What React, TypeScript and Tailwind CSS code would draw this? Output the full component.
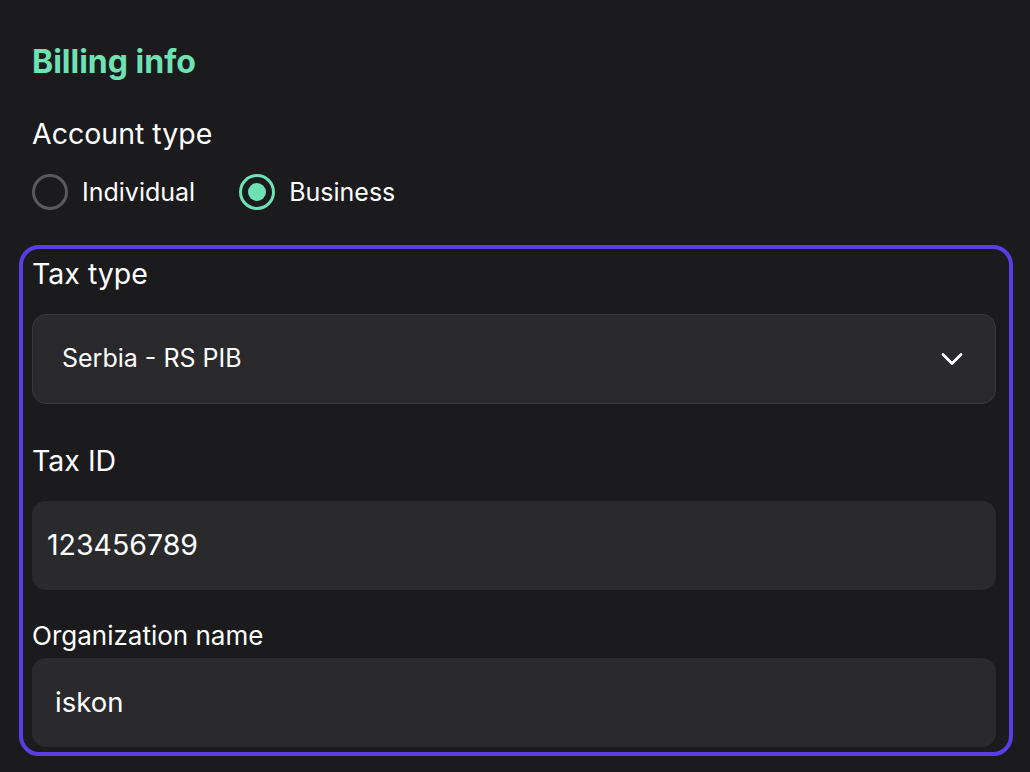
import { ChevronDown } from "lucide-react";

function Radio({ label, checked }: { label: string; checked?: boolean }) {
  return (
    <label className="flex items-center gap-[14px]">
      {checked ? (
        <span className="flex h-[36px] w-[36px] items-center justify-center rounded-full border-[3px] border-[#6ee2b3]">
          <span className="h-[18px] w-[18px] rounded-full bg-[#6ee2b3]" />
        </span>
      ) : (
        <span className="h-[36px] w-[36px] rounded-full border-[3px] border-[#5a595d]" />
      )}
      <span className="text-[25px] leading-[36px] text-white">{label}</span>
    </label>
  );
}

export default function App() {
  return (
    <div
      className="h-[772px] w-[1030px] overflow-hidden bg-[#1b1a1d] px-[19px] pt-[42px] text-white"
      style={{ fontFamily: "Inter, 'Noto Sans', sans-serif" }}
    >
      <div className="pl-[13px]">
        <h1 className="text-[32px] font-bold leading-[40px] text-[#6ee2b3]">
          Billing info
        </h1>
        <p className="mt-[35px] text-[28.5px] leading-[34px]">Account type</p>
        <div className="mt-[23px] flex items-center gap-[44px]">
          <Radio label="Individual" />
          <Radio label="Business" checked />
        </div>
      </div>

      <div className="mt-[35px] w-[994px] rounded-[20px] border-4 border-[#5b3de6] pb-[5px] pl-[9px] pr-[13px] pt-[8px]">
        <p className="text-[28.5px] leading-[34px]">Tax type</p>
        <div className="mt-[23px] flex h-[90px] items-center justify-between rounded-[14px] border border-[#3a3a3e] bg-[#2a2a2d] pl-[29px] pr-[25px]">
          <span className="text-[25px]">Serbia - RS PIB</span>
          <ChevronDown className="h-[36px] w-[36px]" strokeWidth={1.8} />
        </div>

        <p className="mt-[40px] text-[28.5px] leading-[34px]">Tax ID</p>
        <div className="mt-[23px] flex h-[89px] items-center rounded-[14px] bg-[#2a2a2d] pl-[15px]">
          <span className="text-[28.5px]">123456789</span>
        </div>

        <p className="mt-[31px] text-[26px] leading-[30px]">
          Organization name
        </p>
        <div className="mt-[7px] flex h-[89px] items-center rounded-[14px] bg-[#2a2a2d] pl-[23px]">
          <span className="text-[27.5px]">iskon</span>
        </div>
      </div>
    </div>
  );
}
